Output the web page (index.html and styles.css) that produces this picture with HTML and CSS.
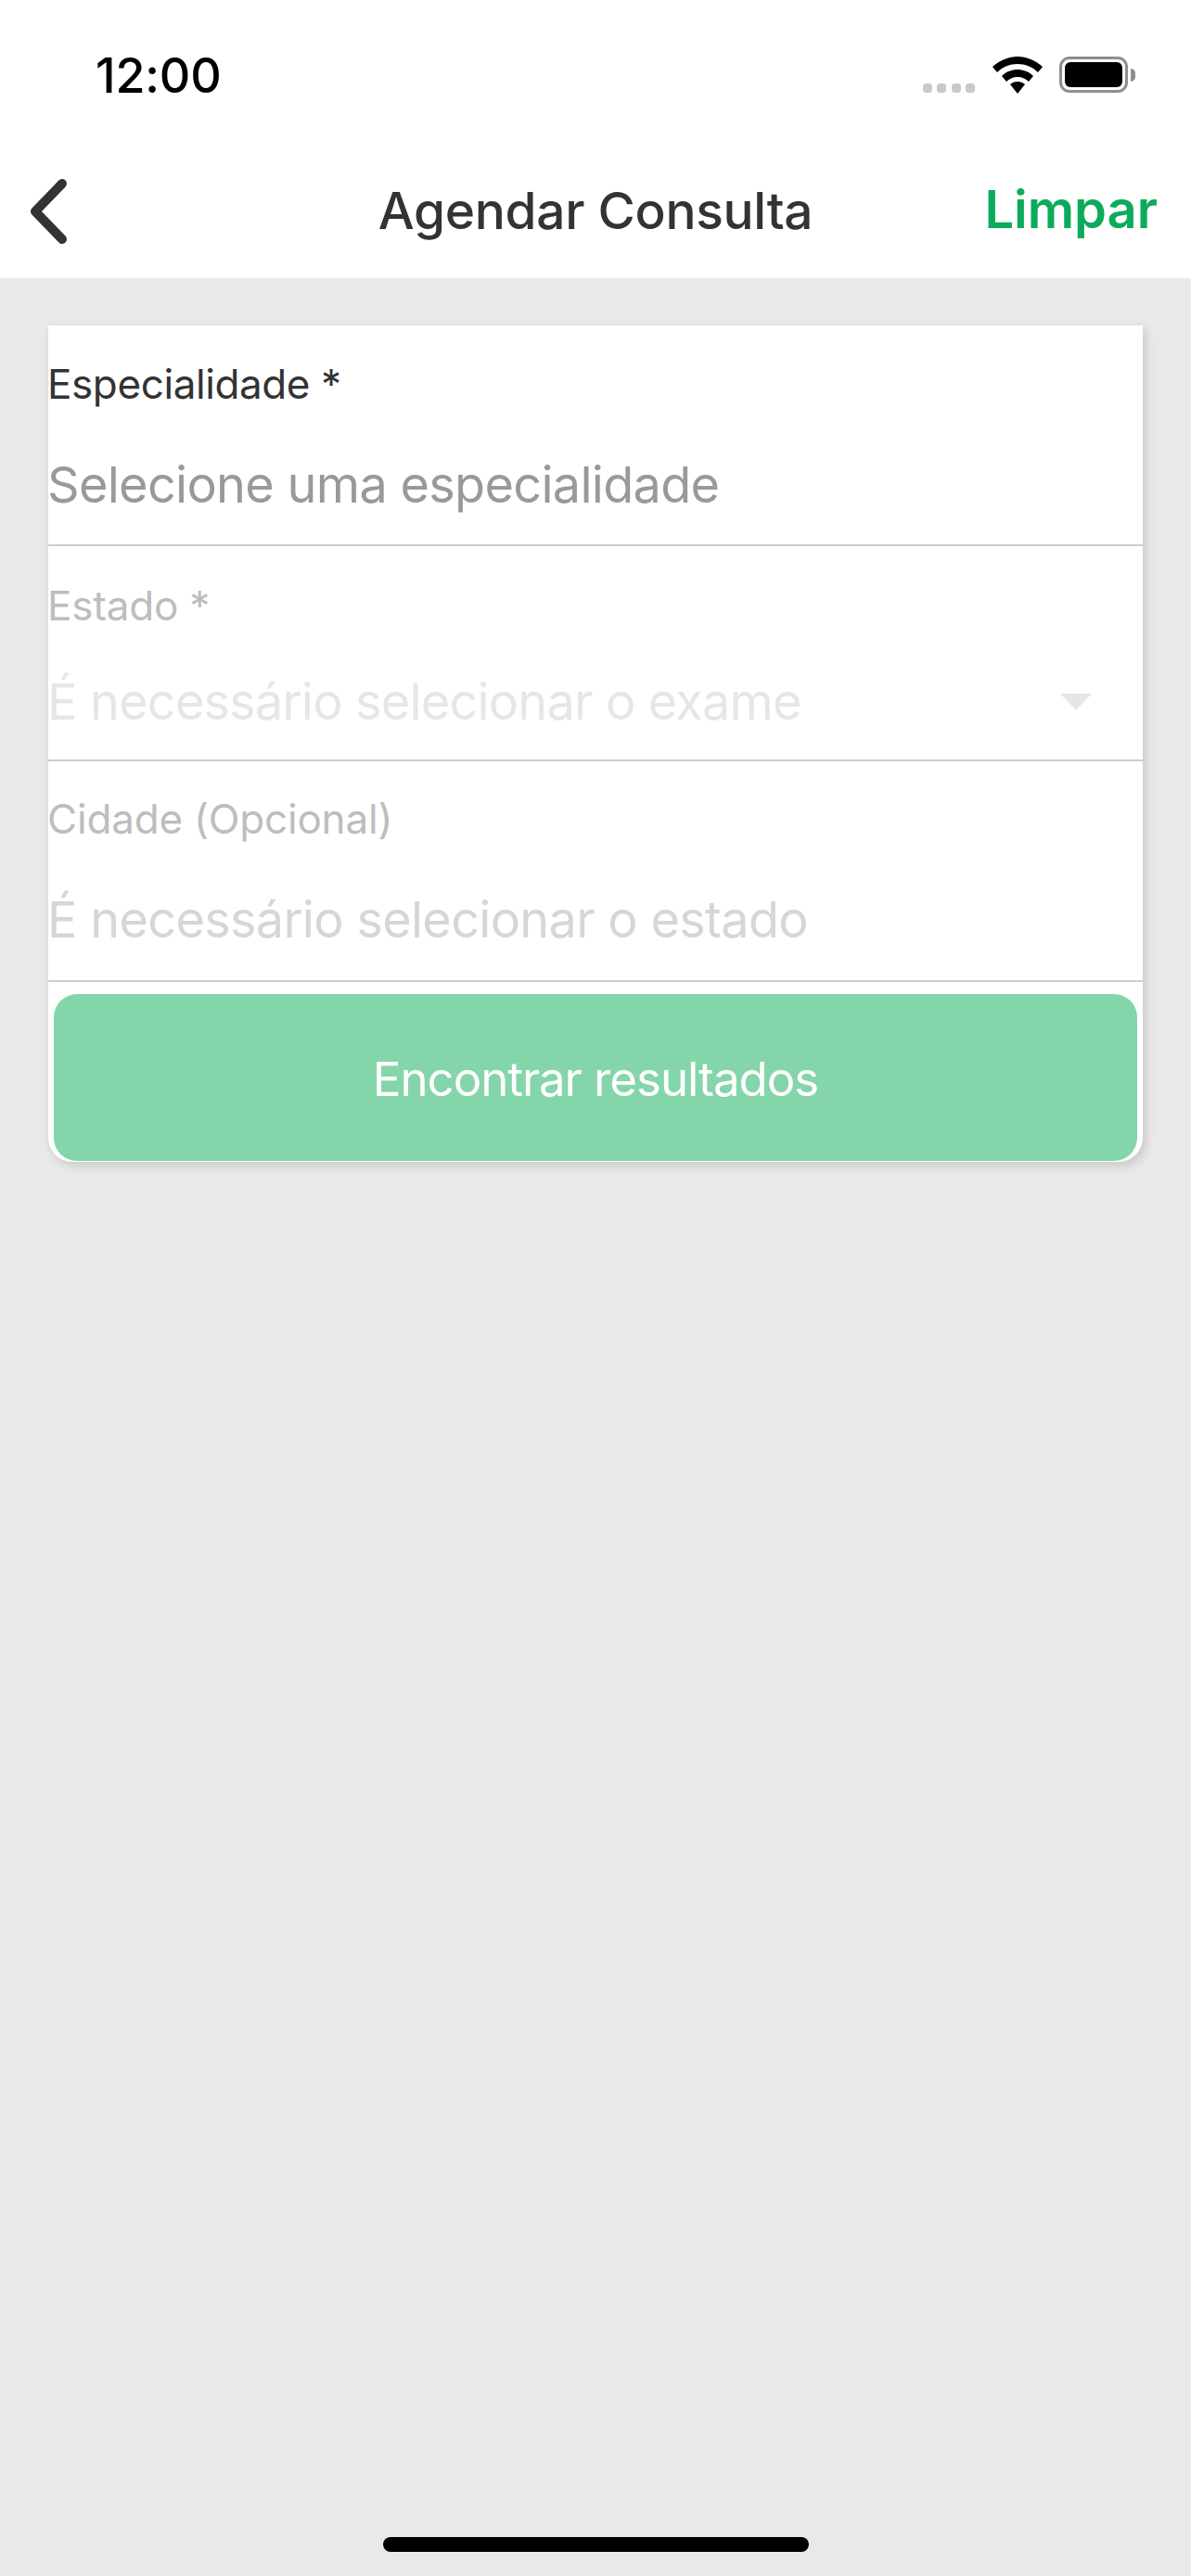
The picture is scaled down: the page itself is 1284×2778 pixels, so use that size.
FILE: index.html
```html
<!DOCTYPE html>
<html lang="pt-BR">
<head>
<meta charset="utf-8">
<title>Agendar Consulta</title>
<link rel="stylesheet" href="styles.css">
</head>
<body>
<div class="screen">
  <header class="top">
    <div class="status">
      <span class="time">12:00</span>
      <div class="status-icons">
        <div class="dots"><i></i><i></i><i></i><i></i></div>
        <svg class="wifi" width="54" height="40" viewBox="0 0 54 40"><path d="M27 0C17 0 8 4 0 11l5 6c6-6 14-9 22-9s16 3 22 9l5-6C46 4 37 0 27 0Z"/><path d="M27 14c-6 0-12 2-17 7l5 6c3-3 7-5 12-5s9 2 12 5l5-6c-5-5-11-7-17-7Z"/><path d="M27 27c-3 0-6 1-8 3l8 10 8-10c-2-2-5-3-8-3Z"/></svg>
        <div class="battery"><div class="battery-fill"></div></div>
        <div class="battery-cap"></div>
      </div>
    </div>
    <nav class="nav">
      <svg class="back" width="42" height="72" viewBox="0 0 42 72"><path d="M35 6 6 36l29 30" fill="none" stroke="#333" stroke-width="10" stroke-linecap="round" stroke-linejoin="round"/></svg>
      <h1 class="title">Agendar Consulta</h1>
      <span class="clear">Limpar</span>
    </nav>
  </header>
  <main class="content">
    <form class="card">
      <div class="field field-a">
        <div class="label">Especialidade *</div>
        <div class="value">Selecione uma especialidade</div>
      </div>
      <div class="field field-b">
        <div class="label label-off">Estado *</div>
        <div class="value-row">
          <div class="value value-faint">É necessário selecionar o exame</div>
          <span class="caret"></span>
        </div>
      </div>
      <div class="field field-c">
        <div class="label label-off">Cidade (Opcional)</div>
        <div class="value value-off">É necessário selecionar o estado</div>
      </div>
      <button class="submit" type="button">Encontrar resultados</button>
    </form>
  </main>
  <div class="home"></div>
</div>
</body>
</html>
```
FILE: styles.css
```css
* { box-sizing: border-box; }
html, body { margin: 0; padding: 0; }
body { font-family: Inter, "Liberation Sans", sans-serif; background: #e9e9e9; }
.screen { position: relative; width: 1284px; height: 2778px; overflow: hidden; display: flex; flex-direction: column; background: #e9e9e9; }
.top { height: 300px; background: #fff; display: flex; flex-direction: column; }
.status { height: 168px; padding: 56px 60px 0 103px; display: flex; justify-content: space-between; align-items: flex-start; }
.time { font-size: 52px; line-height: 52px; font-weight: 500; letter-spacing: -0.2px; color: #000; }
.status-icons { display: flex; align-items: flex-start; padding-top: 5px; }
.dots { display: flex; gap: 5.4px; margin-top: 29px; margin-right: 19px; }
.dots i { width: 10px; height: 10px; border-radius: 3.5px; background: #c9c9c9; }
.wifi { fill: #000; margin-right: 18px; }
.battery { width: 74px; height: 39px; border: 3px solid #8e8e8e; border-radius: 11px; padding: 3px; }
.battery-fill { width: 100%; height: 100%; background: #000; border-radius: 6px; }
.battery-cap { width: 5px; height: 14px; margin: 13px 0 0 3px; background: #8e8e8e; border-radius: 0 7px 7px 0; }
.nav { height: 132px; padding: 24px 36px 0 32px; display: flex; justify-content: space-between; align-items: flex-start; position: relative; }
.back { display: block; }
.title { position: absolute; left: 0; right: 0; top: 31px; margin: 0; text-align: center; font-size: 55px; line-height: 56px; font-weight: 500; letter-spacing: -0.3px; color: #333; }
.clear { font-size: 56px; line-height: 56px; font-weight: 600; color: #0bab5b; margin-top: 6px; }
.content { flex: 1; padding: 51px 52px 0; }
.card { background: #fff; border-radius: 0 0 26px 26px; box-shadow: 3px 4px 11px rgba(0,0,0,.15); height: 902px; display: flex; flex-direction: column; }
.field { border-bottom: 2px solid #cdcdcd; }
.field-a { height: 238px; padding-top: 37px; }
.field-b { height: 232px; padding-top: 38px; }
.field-c { height: 238px; padding-top: 36px; }
.label { font-size: 44px; line-height: 52px; letter-spacing: -0.4px; color: #333; margin-left: -1px; }
.label-off { color: #bdbdbd; letter-spacing: -0.2px; }
.value { font-size: 54px; line-height: 64px; letter-spacing: -0.7px; margin-top: 51px; margin-left: -1px; color: #999; }
.value-faint { color: #e6e6e6; margin-top: 0; letter-spacing: -0.8px; }
.value-off { color: #d6d6d6; }
.value-row { display: flex; justify-content: space-between; align-items: center; padding-right: 55px; margin-top: 46px; }
.caret { width: 0; height: 0; border-left: 17px solid transparent; border-right: 17px solid transparent; border-top: 18px solid #e6e6e6; }
.submit { display: block; height: 180px; margin: 13px 6px 0; border: 0; border-radius: 25px; background: #84d5aa; color: #fff; font: 400 51px/1 Inter, "Liberation Sans", sans-serif; letter-spacing: -1.05px; padding-top: 3px; }
.home { position: absolute; left: 413px; top: 2736px; width: 459px; height: 16px; border-radius: 8px; background: #000; }
```
